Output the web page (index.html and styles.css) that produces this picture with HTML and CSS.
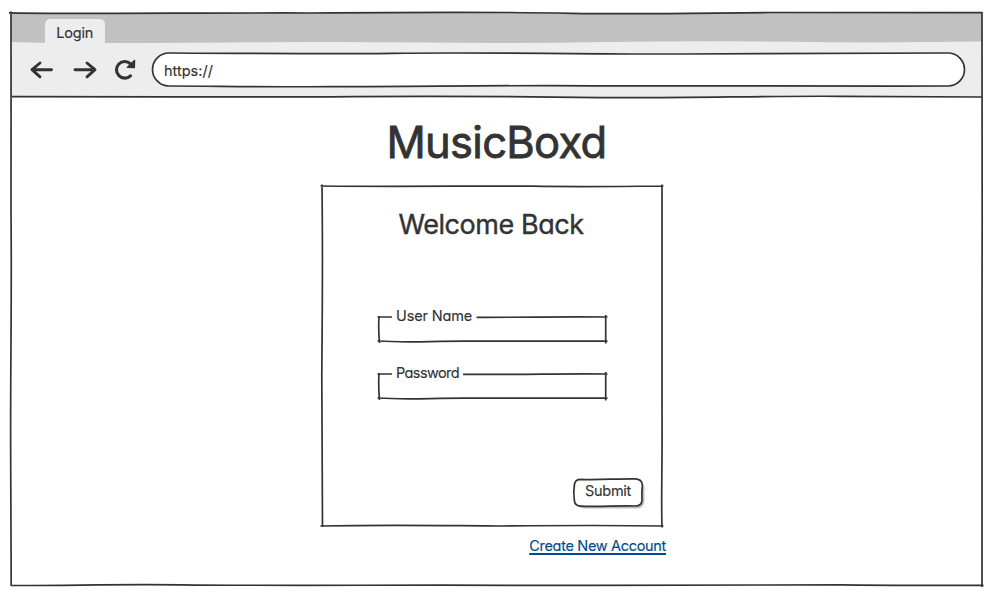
FILE: index.html
```html
<!DOCTYPE html>
<html lang="en">
<head>
<meta charset="utf-8">
<title>Login</title>
<link rel="stylesheet" href="styles.css">
</head>
<body>
<div class="window">
  <header class="chrome">
    <div class="tabs"><div class="tab"><span class="tab-label">Login</span></div></div>
    <nav class="toolbar">
      <svg class="nav-icons" width="112" height="26" viewBox="0 0 112 26">
        <path d="M22.500 12.700H3M11 6L3 12.700L11 19.800"/>
        <path d="M46 12.700H65M58 6L66 12.700L58 19.800"/>
        <path class="loop" d="M101.500 18.800A8.300 8.300 0 1 1 101.500 6.800"/>
        <path class="solid" d="M105.500 3.500L98.500 10.200L105.300 10.600Z"/>
      </svg>
      <div class="address"><span class="url">https://</span>
        <svg class="sketch" viewBox="0 0 812 33"><path d="M17 0C90 .5 170 1 240 .3C330 -.7 390 .8 480 1C570 1.200 640 0 795 0A16.500 16.500 0 0 1 795 33C670 33.300 540 33 440 32.800C360 32.200 300 33.200 180 33.700C100 34 60 33 16 33A16.500 16.500 0 0 1 16 0Z"/></svg>
      </div>
    </nav>
    <svg class="sketch" viewBox="0 0 971 84">
      <path class="pale" d="M0 29Q45 30.500 94 30.200T240 29.200T420 29.500T600 29T780 28.800T971 28.600V32H0Z"/>
      <path d="M1 83.700C120 83.300 200 84.500 320 83.800C430 82.700 510 83.500 590 84.600C680 85.200 760 82.700 830 83.300C880 83.800 930 84 971 84"/>
    </svg>
  </header>
  <main class="page">
    <h1 class="brand">MusicBoxd</h1>
    <section class="card">
      <svg class="sketch" viewBox="0 0 340 340">
        <path d="M-1.500 0C90 1 150 -.3 210 .2C260 1 300 .5 341.500 0M0 -1.500C1 80 .2 130 -.2 190C0 250 .5 300 .5 341M340 -1.500C339.500 80 340.500 160 340 220C340.500 280 339 310 340 341.500M-1.500 340C70 338.700 120 339.700 180 340C230 339.500 280 339 341.500 340"/>
      </svg>
      <h2 class="welcome">Welcome Back</h2>
      <div class="field">
        <span class="label username">User Name</span>
        <svg class="sketch" viewBox="0 0 227 25"><path d="M-1.500 0H13M97.500 .3C150 .5 180 -.6 228.500 0M0 -1Q-.8 12 .5 26M226.700 -2V26.500M-1.500 24C30 26 50 24 90 24.200H228.500"/></svg>
      </div>
      <div class="field">
        <span class="label password">Password</span>
        <svg class="sketch" viewBox="0 0 227 25"><path d="M-1.500 0H13M84 .3C150 .8 180 -.6 228.500 0M0 -1Q-.8 12 .5 26M226.700 -2V26.500M-1.500 24C30 26 50 24 90 24.200H228.500"/></svg>
      </div>
      <button class="submit"><span class="submit-label">Submit</span>
        <svg class="sketch" viewBox="0 0 68 27"><path d="M6 .4C25 1.200 42 -.4 61 -.2Q68 0 68.400 6Q67.500 13 68 21Q68 27 61.500 27C45 26.300 25 28.200 7 27.200Q.2 27 .3 20.500Q-.7 13 .3 7Q.5 .5 6 .4Z"/></svg>
      </button>
    </section>
    <a class="create" href="#">Create New Account</a>
  </main>
  <svg class="sketch" viewBox="0 0 971 573">
    <path d="M-2 -.2C80 1.200 180 -.3 300 0C400 -.8 500 -1 560 .3C640 1.500 700 -.2 760 -.5C840 -.8 910 0 971 -.4M0 -1.500C.5 80 -.3 120 0 200C1 280 -.8 360 -.3 450L.2 573M971 -1C970.600 120 971.600 200 971 300C970.300 400 971.500 480 971 574M0 572.500C60 572.700 100 571 170 571.800C260 573 380 571.800 500 572.300C620 573 760 571 830 571.800C880 572.500 930 572.200 972.500 572.400"/>
  </svg>
</div>
</body>
</html>
```
FILE: styles.css
```css
* { box-sizing: border-box; }
body {
  min-height: 596px;
  margin: 0;
  padding: 13px 12px 0 11px;
  background: #fff;
  color: #333;
  font: 14.500px/20px Inter, "Liberation Sans", sans-serif;
  font-feature-settings: "cv11";
  -webkit-text-stroke: 0.150px currentColor;
}
.window { position: relative; width: 971px; height: 573px; }
.sketch {
  position: absolute;
  inset: 0;
  width: 100%;
  height: 100%;
  overflow: visible;
  pointer-events: none;
  fill: none;
  stroke: #333;
  stroke-width: 1.700;
}
.pale { fill: #ededed; stroke: none; }
.chrome { position: relative; height: 84px; background: #ededed; }
.tabs { display: flex; height: 30px; padding: 6px 0 0 34px; background: #c1c1c1; }
.tab {
  display: flex;
  justify-content: center;
  width: 59.500px;
  padding-top: 4px;
  border-radius: 5px 5px 0 0;
  background: #ededed;
}
.tab-label { letter-spacing: -0.200px; }
.toolbar { display: flex; align-items: center; height: 54px; padding: 0 0 1px 18px; }
.nav-icons { fill: none; stroke: #333; stroke-width: 2.900; stroke-linecap: round; stroke-linejoin: round; }
.nav-icons .solid { fill: #333; stroke-width: 1.500; }
.nav-icons .loop { stroke-width: 3.100; }
.address {
  position: relative;
  display: flex;
  align-items: center;
  width: 812px;
  height: 33px;
  margin-left: 12px;
  padding: 3px 0 0 11px;
  border-radius: 17px;
  background: #fff;
}
.page { display: flex; flex-direction: column; height: 489px; }
.brand {
  margin: 17px 0 0;
  text-align: center;
  font-size: 43.500px;
  line-height: 56px;
  font-weight: 400;
  letter-spacing: -0.700px;
  -webkit-text-stroke: 0.800px currentColor;
  stroke-linejoin: round;
}
.card {
  position: relative;
  display: flex;
  flex-direction: column;
  width: 340px;
  height: 340px;
  margin: 16px 0 0 311px;
  padding: 21px 0 0 57px;
}
.welcome {
  margin: 0 59px 74px 0;
  text-align: center;
  white-space: nowrap;
  font-size: 27px;
  line-height: 36px;
  font-weight: 400;
  letter-spacing: -0.450px;
  -webkit-text-stroke: 0.400px currentColor;
}
.field { position: relative; width: 227px; height: 25px; margin-bottom: 32px; }
.label { display: block; margin: -11px 0 0 17px; }
.username { letter-spacing: -0.150px; }
.password { letter-spacing: -0.600px; }
.submit {
  position: relative;
  align-self: flex-end;
  width: 68px;
  height: 27px;
  margin: 48px 20px 0 0;
  padding: 0;
  border: 0;
  border-radius: 7px;
  background: #fff;
  box-shadow: 2.500px 2.500px 0 #c1c1c1;
  color: inherit;
  font: inherit;
}
.submit-label { display: block; margin-top: -4px; letter-spacing: -0.300px; }
.create {
  align-self: flex-end;
  margin: 10px 316px 0 0;
  color: #004b8d;
  letter-spacing: -0.320px;
  text-decoration-thickness: 1.500px;
  text-underline-offset: 2px;
}
```
